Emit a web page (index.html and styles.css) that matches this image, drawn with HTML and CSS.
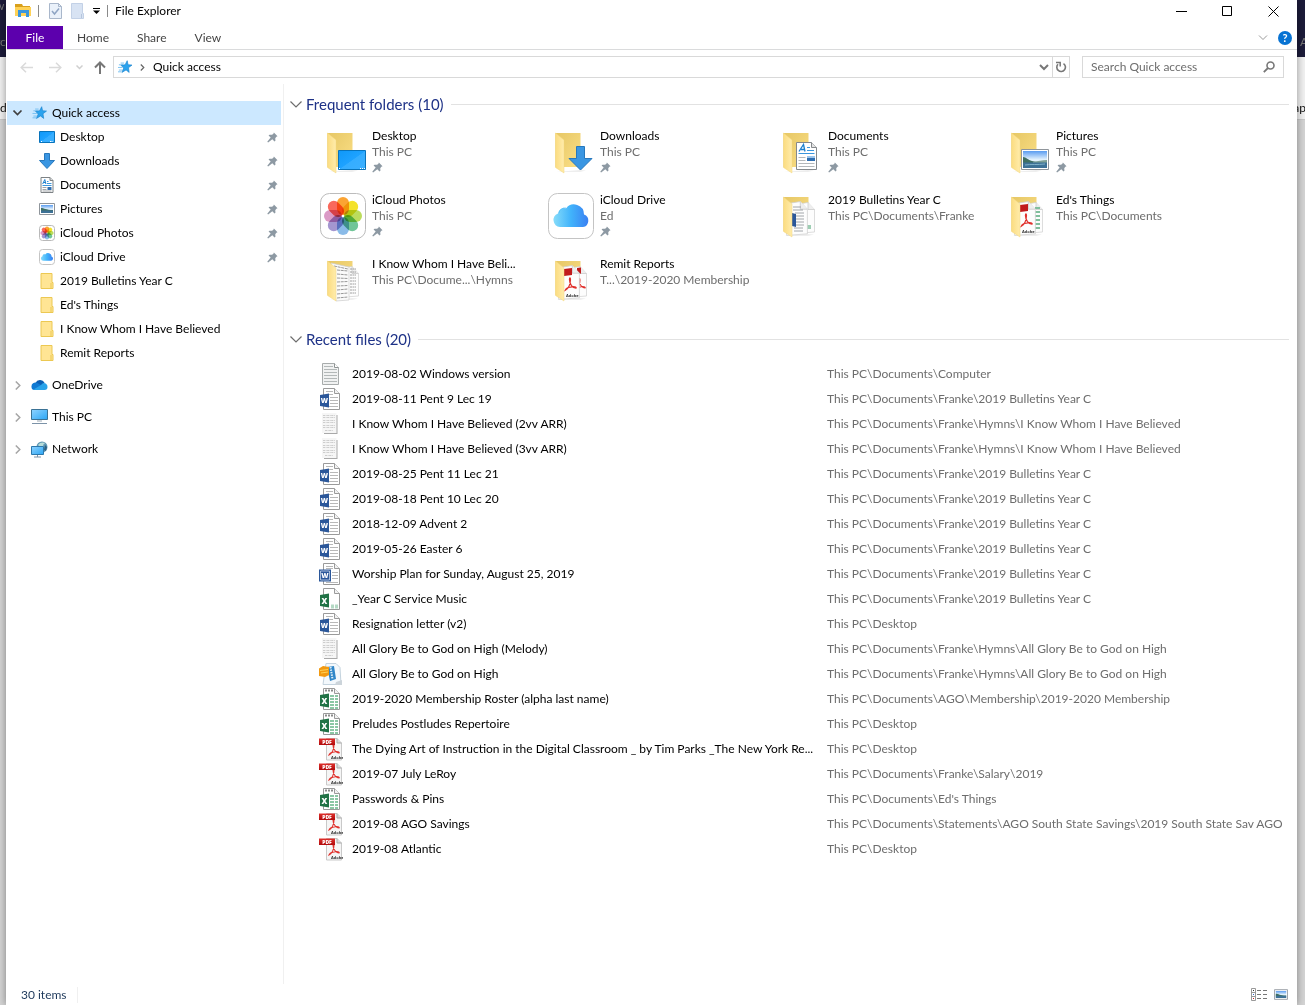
FILE: index.html
```html
<!DOCTYPE html>
<html lang="en">
<head>
    <meta charset="UTF-8">
    <meta name="viewport" content="width=device-width, initial-scale=1.0">
    <title>File Explorer</title>
    <link rel="stylesheet" href="styles.css">
</head>
<body>
    <!-- Shared gradients -->
    <svg class="gradients" aria-hidden="true">
        <defs>
            <linearGradient id="gBlue" x1="0" y1="0" x2="1" y2="1">
                <stop offset="0" stop-color="#0f98f8"/><stop offset=".5" stop-color="#1ea2ff"/><stop offset=".52" stop-color="#35adff"/><stop offset="1" stop-color="#3cb0ff"/>
            </linearGradient>
            <linearGradient id="gScreen" x1="0" y1="0" x2="1" y2="1">
                <stop offset="0" stop-color="#8fd3ff"/><stop offset="1" stop-color="#2ba6f5"/>
            </linearGradient>
            <linearGradient id="gBack" x1="0" y1="0" x2="1" y2="1">
                <stop offset="0" stop-color="#e6c765"/><stop offset="1" stop-color="#fbdf86"/>
            </linearGradient>
            <linearGradient id="gFlap" x1="0" y1="0" x2="1" y2="0">
                <stop offset="0" stop-color="#fbdc80"/><stop offset="1" stop-color="#ffecac"/>
            </linearGradient>
            <linearGradient id="gCloud" x1="0" y1="0" x2="1" y2="0">
                <stop offset="0" stop-color="#86dcfa"/><stop offset=".5" stop-color="#41b3fb"/><stop offset="1" stop-color="#3a80f2"/>
            </linearGradient>
            <linearGradient id="gSky" x1="0" y1="0" x2="0" y2="1">
                <stop offset="0" stop-color="#5a9cf0"/><stop offset=".5" stop-color="#e2f1fd"/>
            </linearGradient>
            <linearGradient id="gRed" x1="0" y1="0" x2="0" y2="1">
                <stop offset="0" stop-color="#e0302c"/><stop offset="1" stop-color="#b00a0c"/>
            </linearGradient>
        </defs>
    </svg>

    <!-- Icon sprite -->
    <svg class="sprite" aria-hidden="true">
        <symbol id="i-explorer" viewBox="0 0 16 16">
            <path d="M0 1h7l1 2h7v3H0z" fill="#d9a01c"/>
            <path d="M0 4h16v9H0z" fill="#ffd257"/>
            <path d="M3 7h11v7h-3v-4H6v4H3z" fill="#3a96dd"/>
        </symbol>
        <symbol id="i-props" viewBox="0 0 13 16">
            <path d="M.5.5h9l3 3v12H.5z" fill="#eaf1fa" stroke="#a9b7cb"/>
            <path d="M9.500.5v3h3" fill="none" stroke="#a9b7cb"/>
            <path d="M3 8l2.500 3L10 5.500" fill="none" stroke="#8fa5c4" stroke-width="1.500"/>
        </symbol>
        <symbol id="i-newfolder" viewBox="0 0 13 16">
            <path d="M.5.5h11v10h1v5H.5z" fill="#d8e3f3" stroke="#c3d1e6"/>
            <path d="M10.500 11v4" stroke="#b5c5dc"/>
        </symbol>
        <symbol id="i-star" viewBox="0 0 16 16">
            <path d="M1 5.500h5M3 3.500h4M0 8.500h5M1 11.500h4M0 13.500h4" stroke="#6bbcf0"/>
            <path d="M10.500.8l1 4.600 4.500.4-4 3 .8 5.400-3.600-2.800-4.700 2.800 2-5L3.500 6l4.600-.5z" fill="#2ba3ee" stroke="#1681cc" stroke-width=".7"/>
        </symbol>
        <symbol id="i-pin" viewBox="0 0 12 12">
            <path d="M7.500.5l4 4-1.300.8-1.200 1.600.2 2.600-1 .9-2.400-2.400L1.200 11.500l-.9-.9L4 6 1.700 3.800l1-.9 2.800.2L7 2z" fill="#8d99a3"/>
        </symbol>

        <symbol id="i-desktop" viewBox="0 0 16 12">
            <path d="M.5.5h15v11H.5z" fill="url(#gBlue)" stroke="#0873bb"/>
            <path d="M2 10.500h1M11 10.500h3" stroke="#fff" stroke-dasharray="1 .5"/>
        </symbol>
        <symbol id="i-download" viewBox="0 0 16 16">
            <path d="M5.500.5h5v7h5L8 15.500.5 7.500h5z" fill="#3a96e2" stroke="#2778bd"/>
        </symbol>
        <symbol id="i-document" viewBox="0 0 13 16">
            <path d="M.5.5h9l3 3v12H.5z" fill="#fff" stroke="#7d8285"/>
            <path d="M9.500.5v3h3" fill="#ddd" stroke="#7d8285"/>
            <path d="M2.200 7L4.300 2.500 5.400 7M3 5.500h2" fill="none" stroke="#1d80cf"/>
            <path d="M6.500 4.500H8M6.500 6.500H11M2 8.500h9" stroke="#3a96dd"/>
            <path d="M2 10.500h4M2 12.500h4M2 14h9" stroke="#8a8f94" stroke-width=".8"/>
            <path d="M7 10h4v3H7z" fill="#2f6eb0"/>
        </symbol>
        <symbol id="i-picture" viewBox="0 0 28 21">
            <path d="M2 2h24v17H2z" fill="url(#gSky)"/>
            <path d="M2 8c3 0 5 3 9 4l9 2H2z" fill="#3f6f62"/>
            <path d="M12 13c5-1 9-2 14-2v3H12z" fill="#7d9f95"/>
            <path d="M2 13.500h24V19H2z" fill="#3d7196"/>
            <path d="M4 16c6-1 12 0 20-1" fill="none" stroke="#7eb0c9"/>
            <path d="M.5.5h27v20H.5zM2 2v17h24V2z" fill="#fff" fill-rule="evenodd"/>
            <path d="M.5.5h27v20H.5z" fill="none" stroke="#8f959b"/>
        </symbol>
        <symbol id="i-picture-sm" viewBox="0 0 16 12">
            <path d="M.5.5h15v11H.5z" fill="#fff" stroke="#8f959b"/>
            <path d="M2 2h12v8H2z" fill="url(#gSky)"/>
            <path d="M2 5c3 0 5 2 12 2v1H2z" fill="#3f6f62"/>
            <path d="M2 7.500h12V10H2z" fill="#3d7196"/>
        </symbol>
        <symbol id="p-petals" viewBox="0 0 46 46">
            <g class="petals">
                <rect x="17" y="4" width="12" height="18" rx="6" fill="#fb9a1c"/>
                <rect x="17" y="4" width="12" height="18" rx="6" fill="#f3df14" transform="rotate(45 23 23)"/>
                <rect x="17" y="4" width="12" height="18" rx="6" fill="#b4d84a" transform="rotate(90 23 23)"/>
                <rect x="17" y="4" width="12" height="18" rx="6" fill="#61bf8d" transform="rotate(135 23 23)"/>
                <rect x="17" y="4" width="12" height="18" rx="6" fill="#7db4e6" transform="rotate(180 23 23)"/>
                <rect x="17" y="4" width="12" height="18" rx="6" fill="#9a8bcb" transform="rotate(225 23 23)"/>
                <rect x="17" y="4" width="12" height="18" rx="6" fill="#d78fc0" transform="rotate(270 23 23)"/>
                <rect x="17" y="4" width="12" height="18" rx="6" fill="#f9594a" transform="rotate(315 23 23)"/>
            </g>
            <circle cx="23" cy="23" r="1.200" fill="#fff"/>
        </symbol>
        <symbol id="p-cloud" viewBox="0 0 46 46">
            <path d="M12 34a7 7 0 0 1-2-13.500 6 6 0 0 1 8-5 10 10 0 0 1 18 6 6.500 6.500 0 0 1-1 12.500z" fill="url(#gCloud)"/>
            <path d="M11 20a6 6 0 0 1 7-5l1 3" fill="none" stroke="#55bdf5" stroke-width=".7"/>
        </symbol>
        <symbol id="i-photos" viewBox="0 0 46 46">
            <rect x=".5" y=".5" width="45" height="45" rx="9" fill="#fff" stroke="#bcbcbc"/>
            <use href="#p-petals"/>
        </symbol>
        <symbol id="i-photos-sm" viewBox="0 0 16 16">
            <rect x=".5" y=".5" width="15" height="15" rx="3" fill="#fff" stroke="#b9b9b9"/>
            <use href="#p-petals" x="0" y="0" width="16" height="16"/>
        </symbol>
        <symbol id="i-icloud" viewBox="0 0 46 46">
            <rect x=".5" y=".5" width="45" height="45" rx="9" fill="#fff" stroke="#c4c4c4"/>
            <use href="#p-cloud"/>
        </symbol>
        <symbol id="i-icloud-sm" viewBox="0 0 16 16">
            <rect x=".5" y=".5" width="15" height="15" rx="3" fill="#fff" stroke="#c4c4c4"/>
            <use href="#p-cloud" x="0" y="0" width="16" height="16"/>
        </symbol>
        <symbol id="i-folder-sm" viewBox="0 0 13 16">
            <path d="M.5.500h11v9h1v6H.5z" fill="#ffe594" stroke="#ecc852"/>
            <path d="M10.500 10v5" stroke="#ecc852"/>
        </symbol>
        <symbol id="i-onedrive" viewBox="0 0 16 12">
            <path d="M4 4a5 5 0 0 1 9-.5L10 8 2 6z" fill="#0b5fb4"/>
            <path d="M0 8a4 4 0 0 1 5.500-4.200L11 7l-7 4H3a3 3 0 0 1-3-3z" fill="#0f7ad3"/>
            <path d="M2 10.500L9.500 6l1.500-1.500A3.500 3.500 0 0 1 16 8a3 3 0 0 1-3 3H3.500z" fill="#28a3ea"/>
        </symbol>
        <symbol id="i-pc" viewBox="0 0 17 16">
            <path d="M.5.5h16v10H.5z" fill="url(#gScreen)" stroke="#3b7295"/>
            <path d="M6 12h5" stroke="#99a7b3"/>
            <path d="M1 14.500h15" stroke="#7c93a8"/>
        </symbol>
        <symbol id="i-network" viewBox="0 0 17 17">
            <circle cx="11" cy="6" r="5.500" fill="#5e97b3"/>
            <path d="M7 4c2-3 5-3 7-2l-2 2 1 2-3 1z" fill="#b7dcd9"/>
            <path d="M14 4l2 2-1 4-2-1z" fill="#2c6184"/>
            <path d="M.5 5.500h12v8H.5z" fill="url(#gScreen)" stroke="#2c78ac"/>
            <path d="M6.500 14v2M3 16h7" stroke="#7c93a8"/>
        </symbol>

        <!-- open folder, drawn as two parts so papers can sit between them -->
        <symbol id="p-back" viewBox="0 0 46 46">
            <path d="M8 43l24-2 6 .5-6 1.500H15z" fill="#eee"/>
            <path d="M7.500 4h25v34h-25z" fill="url(#gBack)"/>
        </symbol>
        <symbol id="p-flap" viewBox="0 0 46 46">
            <path d="M7.500 4l8.500 7v33l-8.500-5.500z" fill="url(#gFlap)" stroke="#f3d67e" stroke-width=".5"/>
        </symbol>
        <symbol id="p-page" viewBox="0 0 20 32">
            <path d="M.5 2.500L13 .5l6.500 7V30L.5 31.500z" fill="#fdfdfd" stroke="#cfcfcf" stroke-width=".7"/>
            <path d="M13 .5v7h6.500" fill="#eee" stroke="#c5c5c5" stroke-width=".7"/>
        </symbol>
        <symbol id="p-swirl" viewBox="0 0 12 14">
            <path d="M1 12c3-1 5-6 5-10 0-2-1-2-1 0 0 4 3 8 6 8 1-1-2-2-5-1-2 0-4 1-5 3z" fill="none" stroke="#e0312c" stroke-width="1.100"/>
        </symbol>

        <symbol id="t-desktop" viewBox="0 0 46 46">
            <use href="#p-back"/><use href="#p-flap"/>
            <path d="M18.500 21.500h27v19h-27z" fill="url(#gBlue)" stroke="#0873bb"/>
            <path d="M19 39.500h1M40 39.500h5" stroke="#fff" stroke-dasharray="1 1"/>
        </symbol>
        <symbol id="t-downloads" viewBox="0 0 46 46">
            <use href="#p-back"/><use href="#p-flap"/>
            <path d="M28.500 17.500h8v12h7.500L32.500 41 21 29.500h7.500z" fill="#3a96e2" stroke="#2778bd"/>
        </symbol>
        <symbol id="t-documents" viewBox="0 0 46 46">
            <use href="#p-back"/><use href="#p-flap"/>
            <path d="M20.500 13.500h15l5 5v22h-20z" fill="#fff" stroke="#85898c"/>
            <path d="M35.500 13.500v5h5" fill="#e4e4e4" stroke="#85898c"/>
            <path d="M23 22.500l4.500-7 1.500 7M25 20.500h4" fill="none" stroke="#1d80cf" stroke-width="1.300"/>
            <path d="M31 18.500h3M31 21.500h7M22.500 24.500h16" stroke="#3a96dd"/>
            <path d="M22.500 28.500h7M22.500 31.500h7M22.500 34.500h16M22.500 37.500h16" stroke="#b4b8bb"/>
            <path d="M31 27h8v5h-8z" fill="#2f6eb0"/><path d="M31 27h8v2h-8z" fill="#9cc5ec"/>
        </symbol>
        <symbol id="t-pictures" viewBox="0 0 46 46">
            <use href="#p-back"/><use href="#p-flap"/>
            <use href="#i-picture" x="17" y="20" width="28" height="21"/>
        </symbol>
        <symbol id="t-bulletins" viewBox="0 0 46 46">
            <use href="#p-back"/>
            <use href="#p-page" x="19" y="8" width="20" height="34"/>
            <path d="M31 33h4M31 35h4" stroke="#7fbf9b" stroke-width="1.500"/>
            <use href="#p-page" x="10" y="8" width="22" height="35"/>
            <path d="M17 14h8M17 17h10M19 20h9M20 23h8M20 26h8M20 29h8M20 32h8M18 35h9M18 38h9" stroke="#8a8f94" stroke-width=".8"/>
            <path d="M16 20l4 1v13l-4-1z" fill="#2b579a"/>
            <use href="#p-flap"/>
        </symbol>
        <symbol id="t-things" viewBox="0 0 46 46">
            <use href="#p-back"/>
            <use href="#p-page" x="19" y="8" width="20" height="34"/>
            <path d="M31 15h5M31 19h5M31 23h5M31 27h5M31 31h5M31 35h5" stroke="#80bf9c" stroke-width="2"/>
            <use href="#p-page" x="10" y="8" width="22" height="35"/>
            <path d="M16 12l8-1v7l-8 1z" fill="#c11a1c"/>
            <use href="#p-swirl" x="16" y="20" width="13" height="16"/>
            <text x="18" y="40" class="adobe" font-size="4">Adobe</text>
            <use href="#p-flap"/>
        </symbol>
        <symbol id="t-hymns" viewBox="0 0 46 46">
            <use href="#p-back"/>
            <use href="#p-page" x="19" y="8" width="20" height="34"/>
            <path d="M30 12h6M30 15h6M30 18h6M30 21h6M30 24h6M30 27h6M30 30h6M30 33h6M30 36h6" stroke="#888" stroke-width=".8" stroke-dasharray="2 .5"/>
            <path d="M11 6l18 4v33l-13 1z" fill="#fafafa" stroke="#ccc" stroke-width=".7"/>
            <path d="M14 9l14 3M17 13l11 1M17 17l11 1M17 21l11 .5M17 25l11-.5M17 29l11-.5M17 33l11-1M17 37l11-1M17 41l11-1" stroke="#808080" stroke-width=".8" stroke-dasharray="3 .7"/>
            <use href="#p-flap"/>
        </symbol>
        <symbol id="t-remit" viewBox="0 0 46 46">
            <use href="#p-back"/>
            <use href="#p-page" x="19" y="8" width="20" height="34"/>
            <path d="M29 11l4-.5v6l-4 .5z" fill="#c11a1c"/>
            <use href="#p-swirl" x="26" y="20" width="12" height="16"/>
            <use href="#p-page" x="10" y="8" width="22" height="35"/>
            <path d="M16 12l8-1v7l-8 1z" fill="#c11a1c"/>
            <use href="#p-swirl" x="16" y="20" width="13" height="16"/>
            <text x="18" y="40" class="adobe" font-size="4">Adobe</text>
            <use href="#p-flap"/>
        </symbol>

        <symbol id="f-page" viewBox="0 0 24 24">
            <path d="M4.500 1.500h11l5 5v16h-16z" fill="#fff" stroke="#9a9a9a"/>
            <path d="M15.500 1.500v5h5" fill="#f2f2f2" stroke="#9a9a9a"/>
        </symbol>
        <symbol id="f-text" viewBox="0 0 24 24">
            <path d="M3.500 1.500h12l4 4v17h-16z" fill="#f1f2f2" stroke="#a8acac"/>
            <path d="M15.500 1.500v4h4" fill="#fff" stroke="#8f9494"/>
            <path d="M5 4.500h9M5 7.500h13M5 10.500h13M5 13.500h13M5 16.500h13M5 19.500h13" stroke="#b3b8b8"/>
        </symbol>
        <symbol id="f-scan" viewBox="0 0 24 24">
            <path d="M5 3h13.500v19H5z" fill="#a9a9a9"/>
            <path d="M3 1h14.500v20H3z" fill="#f6f6f6"/>
            <path d="M4 3.500h12M4 5.500h12M4 8.500h12M4 10.500h12M4 13.500h12M4 15.500h12M6 18.500h8" stroke="#cdcdcd" stroke-dasharray="2 .6 1 .5"/>
        </symbol>
        <symbol id="f-word" viewBox="0 0 24 24">
            <use href="#f-page"/>
            <path d="M7 4.500h7M7 7.500h7M11 10.500h8M11 13.500h8M11 16.500h8M7 19.500h12" stroke="#b8b8b8"/>
            <path d="M1 8l9-1.500v14L1 19z" fill="#2b579a"/>
            <text x="5.500" y="16" class="badge" font-size="7">W</text>
        </symbol>
        <symbol id="f-worddoc" viewBox="0 0 24 24">
            <use href="#f-page"/>
            <path d="M7 4.500h7M7 6.500h7M13 10.500h6M13 13.500h6M13 16.500h6M7 20.500h12" stroke="#b8b8b8"/>
            <path d="M0 7.500h12v12H0z" fill="#2b579a"/>
            <path d="M1.500 9h9v9h-9z" fill="none" stroke="#dbe6f5" stroke-width=".7"/>
            <text x="6" y="16" class="badge" font-size="7">W</text>
        </symbol>
        <symbol id="f-csv" viewBox="0 0 24 24">
            <use href="#f-page"/>
            <path d="M12 17.500h3v4h-3zM16 17.500h3v4h-3z" fill="#b5dac5"/>
            <path d="M1 8l9-1.500v14L1 19z" fill="#217346"/>
            <text x="5.500" y="16.500" class="badge" font-size="8">X</text>
        </symbol>
        <symbol id="f-excel" viewBox="0 0 24 24">
            <use href="#f-page"/>
            <path d="M6 3.500h8" stroke="#8a8a8a" stroke-width="2" stroke-dasharray="2 1"/>
            <path d="M11 9h8M11 12h8M11 15h8M11 18h8M11 21h8" stroke="#8cc7a5" stroke-width="2" stroke-dasharray="4 1"/>
            <path d="M1 8l9-1.500v14L1 19z" fill="#217346"/>
            <text x="5.500" y="16.500" class="badge" font-size="8">X</text>
        </symbol>
        <symbol id="f-zip" viewBox="0 0 24 24">
            <path d="M7 1.500h10l4 4 1 17H4z" fill="#f3f8fc" stroke="#c4d3de"/>
            <path d="M17 20l6-2v5h-7z" fill="#ccd4da"/>
            <path d="M8 5l7-1 2 13-6 2z" fill="#2f86c8"/>
            <path d="M11.500 5l2 12" stroke="#dcecf6" stroke-width="2" stroke-dasharray="1.500 1"/>
            <path d="M0 6.500L4 4l6 1v8l-4 2-6-1z" fill="#f29a12"/>
            <path d="M1 8.500l8-1M2 11l7-1" stroke="#ffd257"/>
        </symbol>
        <symbol id="f-pdf" viewBox="0 0 24 24">
            <path d="M7.500 1.500H18l4.500 4.500v17h-15z" fill="#f5f5f5" stroke="#c9c9c9"/>
            <path d="M18 1.500V6h4.500" fill="#dcdcdc" stroke="#a9a9a9"/>
            <use href="#p-swirl" x="8" y="6" width="14" height="14"/>
            <text x="12" y="22" class="adobe" font-size="4">Adobe</text>
            <path d="M0 1.500h16V8H0z" fill="url(#gRed)"/>
            <text x="8" y="6.500" class="badge" font-size="5">PDF</text>
        </symbol>
    </svg>

    <!-- Page showing behind the window -->
    <div class="backdrop" aria-hidden="true">
        <div class="backdrop-bar"></div>
        <div class="backdrop-page"></div>
        <span class="peek peek-w">w</span>
        <span class="peek peek-rc">rc</span>
        <span class="peek peek-d">d</span>
        <span class="peek peek-a">A</span>
        <span class="peek peek-ap">ap</span>
    </div>

    <div class="window">
        <header class="title-bar">
            <svg class="app-icon" width="16" height="16"><use href="#i-explorer"/></svg>
            <span class="separator"></span>
            <button class="quick-button" aria-label="Properties"><svg width="13" height="16"><use href="#i-props"/></svg></button>
            <button class="quick-button" aria-label="New folder"><svg width="13" height="16"><use href="#i-newfolder"/></svg></button>
            <button class="quick-button" aria-label="Customize toolbar"><svg width="7" height="6" viewBox="0 0 7 6"><path d="M0 .5h7" stroke="#000"/><path d="M0 2.500h7L3.500 6z"/></svg></button>
            <span class="separator"></span>
            <h1 class="title">File Explorer</h1>
            <div class="window-buttons">
                <button aria-label="Minimize"><svg width="11" height="11"><path d="M0 5.500h11" stroke="#000"/></svg></button>
                <button aria-label="Maximize"><svg width="11" height="11"><path d="M.5.5h9v9h-9z" fill="none" stroke="#000"/></svg></button>
                <button aria-label="Close"><svg width="11" height="11"><path d="M.5.5l10 10M10.500.5l-10 10" stroke="#000"/></svg></button>
            </div>
        </header>

        <nav class="ribbon">
            <button class="tab tab-file">File</button>
            <button class="tab">Home</button>
            <button class="tab">Share</button>
            <button class="tab">View</button>
            <div class="ribbon-tools">
                <button aria-label="Expand the Ribbon"><svg width="10" height="6"><path d="M1 .5l4 4 4-4" fill="none" stroke="#999"/></svg></button>
                <button class="help" aria-label="Help">?</button>
            </div>
        </nav>

        <div class="nav-bar">
            <button class="nav-button" aria-label="Back"><svg width="13" height="11"><path d="M13 5.500H1M6 .8L1.200 5.500 6 10.200" fill="none" stroke="#dadada" stroke-width="1.500"/></svg></button>
            <button class="nav-button" aria-label="Forward"><svg width="13" height="11"><path d="M0 5.500h12M7 .8l4.800 4.700L7 10.200" fill="none" stroke="#dadada" stroke-width="1.500"/></svg></button>
            <button class="nav-button nav-recent" aria-label="Recent locations"><svg width="7" height="5"><path d="M.5.500l3 3 3-3" fill="none" stroke="#cfcfcf" stroke-width="1.500"/></svg></button>
            <button class="nav-button nav-up" aria-label="Up"><svg width="12" height="13"><path d="M6 13V1.500M1 6.500l5-5 5 5" fill="none" stroke="#777" stroke-width="2"/></svg></button>
            <div class="address">
                <svg width="14" height="14"><use href="#i-star"/></svg>
                <svg width="5" height="7"><path d="M.8.500l3 3-3 3" fill="none" stroke="#666" stroke-width="1.200"/></svg>
                <a class="crumb" href="#quick">Quick access</a>
                <button class="address-drop" aria-label="Previous locations"><svg width="10" height="7"><path d="M1 1l4 4 4-4" fill="none" stroke="#777" stroke-width="2"/></svg></button>
                <button class="address-refresh" aria-label="Refresh"><svg width="12" height="12"><path d="M8.500 2.600A4.300 4.300 0 1 1 3 3.200" fill="none" stroke="#777" stroke-width="1.600"/><path d="M1 1.500h4.200v4" fill="none" stroke="#777" stroke-width="1.500"/></svg></button>
            </div>
            <div class="search">
                <input type="search" placeholder="Search Quick access" aria-label="Search Quick access">
                <svg width="12" height="12"><circle cx="7.500" cy="4.500" r="3.500" fill="none" stroke="#777" stroke-width="1.600"/><path d="M5 7L.8 11.200" stroke="#777" stroke-width="1.800"/></svg>
            </div>
        </div>

        <div class="content">
            <aside class="sidebar">
                <a class="tree-item selected" href="#quick">
                    <svg class="arrow" width="9" height="6"><path d="M.5.500l4 4 4-4" fill="none" stroke="#404040" stroke-width="1.600"/></svg>
                    <svg class="tree-icon" width="14" height="14"><use href="#i-star"/></svg>Quick access
                </a>
                <a class="tree-item child" href="#desktop"><svg class="tree-icon" width="16" height="12"><use href="#i-desktop"/></svg>Desktop<svg class="pin" width="11" height="11"><use href="#i-pin"/></svg></a>
                <a class="tree-item child" href="#downloads"><svg class="tree-icon" width="16" height="16"><use href="#i-download"/></svg>Downloads<svg class="pin" width="11" height="11"><use href="#i-pin"/></svg></a>
                <a class="tree-item child" href="#documents"><svg class="tree-icon" width="16" height="16"><use href="#i-document"/></svg>Documents<svg class="pin" width="11" height="11"><use href="#i-pin"/></svg></a>
                <a class="tree-item child" href="#pictures"><svg class="tree-icon" width="16" height="12"><use href="#i-picture-sm"/></svg>Pictures<svg class="pin" width="11" height="11"><use href="#i-pin"/></svg></a>
                <a class="tree-item child" href="#photos"><svg class="tree-icon" width="16" height="16"><use href="#i-photos-sm"/></svg>iCloud Photos<svg class="pin" width="11" height="11"><use href="#i-pin"/></svg></a>
                <a class="tree-item child" href="#icloud"><svg class="tree-icon" width="16" height="16"><use href="#i-icloud-sm"/></svg>iCloud Drive<svg class="pin" width="11" height="11"><use href="#i-pin"/></svg></a>
                <a class="tree-item child" href="#bulletins"><svg class="tree-icon" width="16" height="16"><use href="#i-folder-sm"/></svg>2019 Bulletins Year C</a>
                <a class="tree-item child" href="#things"><svg class="tree-icon" width="16" height="16"><use href="#i-folder-sm"/></svg>Ed's Things</a>
                <a class="tree-item child" href="#hymn"><svg class="tree-icon" width="16" height="16"><use href="#i-folder-sm"/></svg>I Know Whom I Have Believed</a>
                <a class="tree-item child" href="#remit"><svg class="tree-icon" width="16" height="16"><use href="#i-folder-sm"/></svg>Remit Reports</a>
                <a class="tree-item root" href="#onedrive">
                    <svg class="arrow" width="10" height="9"><path d="M2.800.500l4 4-4 4" fill="none" stroke="#a6a6a6" stroke-width="1.500"/></svg>
                    <svg class="tree-icon" width="16" height="12"><use href="#i-onedrive"/></svg>OneDrive
                </a>
                <a class="tree-item root" href="#pc">
                    <svg class="arrow" width="10" height="9"><path d="M2.800.500l4 4-4 4" fill="none" stroke="#a6a6a6" stroke-width="1.500"/></svg>
                    <svg class="tree-icon" width="17" height="16"><use href="#i-pc"/></svg>This PC
                </a>
                <a class="tree-item root" href="#network">
                    <svg class="arrow" width="10" height="9"><path d="M2.800.500l4 4-4 4" fill="none" stroke="#a6a6a6" stroke-width="1.500"/></svg>
                    <svg class="tree-icon" width="17" height="17"><use href="#i-network"/></svg>Network
                </a>
            </aside>

            <main class="files">
                <h2 class="group-title"><svg width="12" height="7"><path d="M.5.500l5.500 5.500L11.500.5" fill="none" stroke="#6d6d6d" stroke-width="1.200"/></svg>Frequent folders (10)</h2>
                <div class="tiles">
                    <a class="tile" href="#desktop">
                        <svg width="46" height="46"><use href="#t-desktop"/></svg>
                        <div class="tile-text"><div>Desktop</div><div class="muted">This PC</div><svg width="11" height="11"><use href="#i-pin"/></svg></div>
                    </a>
                    <a class="tile" href="#downloads">
                        <svg width="46" height="46"><use href="#t-downloads"/></svg>
                        <div class="tile-text"><div>Downloads</div><div class="muted">This PC</div><svg width="11" height="11"><use href="#i-pin"/></svg></div>
                    </a>
                    <a class="tile" href="#documents">
                        <svg width="46" height="46"><use href="#t-documents"/></svg>
                        <div class="tile-text"><div>Documents</div><div class="muted">This PC</div><svg width="11" height="11"><use href="#i-pin"/></svg></div>
                    </a>
                    <a class="tile" href="#pictures">
                        <svg width="46" height="46"><use href="#t-pictures"/></svg>
                        <div class="tile-text"><div>Pictures</div><div class="muted">This PC</div><svg width="11" height="11"><use href="#i-pin"/></svg></div>
                    </a>
                    <a class="tile" href="#photos">
                        <svg width="46" height="46"><use href="#i-photos"/></svg>
                        <div class="tile-text"><div>iCloud Photos</div><div class="muted">This PC</div><svg width="11" height="11"><use href="#i-pin"/></svg></div>
                    </a>
                    <a class="tile" href="#icloud">
                        <svg width="46" height="46"><use href="#i-icloud"/></svg>
                        <div class="tile-text"><div>iCloud Drive</div><div class="muted">Ed</div><svg width="11" height="11"><use href="#i-pin"/></svg></div>
                    </a>
                    <a class="tile" href="#bulletins">
                        <svg width="46" height="46"><use href="#t-bulletins"/></svg>
                        <div class="tile-text"><div>2019 Bulletins Year C</div><div class="muted">This PC\Documents\Franke</div></div>
                    </a>
                    <a class="tile" href="#things">
                        <svg width="46" height="46"><use href="#t-things"/></svg>
                        <div class="tile-text"><div>Ed's Things</div><div class="muted">This PC\Documents</div></div>
                    </a>
                    <a class="tile" href="#hymn">
                        <svg width="46" height="46"><use href="#t-hymns"/></svg>
                        <div class="tile-text"><div>I Know Whom I Have Beli...</div><div class="muted">This PC\Docume...\Hymns</div></div>
                    </a>
                    <a class="tile" href="#remit">
                        <svg width="46" height="46"><use href="#t-remit"/></svg>
                        <div class="tile-text"><div>Remit Reports</div><div class="muted">T...\2019-2020 Membership</div></div>
                    </a>
                </div>

                <h2 class="group-title"><svg width="12" height="7"><path d="M.5.500l5.500 5.500L11.500.5" fill="none" stroke="#6d6d6d" stroke-width="1.200"/></svg>Recent files (20)</h2>
                <table class="recent">
                    <tbody>
                        <tr><td class="name"><svg width="24" height="24"><use href="#f-text"/></svg>2019-08-02 Windows version</td><td>This PC\Documents\Computer</td></tr>
                        <tr><td class="name"><svg width="24" height="24"><use href="#f-word"/></svg>2019-08-11 Pent 9 Lec 19</td><td>This PC\Documents\Franke\2019 Bulletins Year C</td></tr>
                        <tr><td class="name"><svg width="24" height="24"><use href="#f-scan"/></svg>I Know Whom I Have Believed (2vv ARR)</td><td>This PC\Documents\Franke\Hymns\I Know Whom I Have Believed</td></tr>
                        <tr><td class="name"><svg width="24" height="24"><use href="#f-scan"/></svg>I Know Whom I Have Believed (3vv ARR)</td><td>This PC\Documents\Franke\Hymns\I Know Whom I Have Believed</td></tr>
                        <tr><td class="name"><svg width="24" height="24"><use href="#f-word"/></svg>2019-08-25 Pent 11 Lec 21</td><td>This PC\Documents\Franke\2019 Bulletins Year C</td></tr>
                        <tr><td class="name"><svg width="24" height="24"><use href="#f-word"/></svg>2019-08-18 Pent 10 Lec 20</td><td>This PC\Documents\Franke\2019 Bulletins Year C</td></tr>
                        <tr><td class="name"><svg width="24" height="24"><use href="#f-word"/></svg>2018-12-09 Advent 2</td><td>This PC\Documents\Franke\2019 Bulletins Year C</td></tr>
                        <tr><td class="name"><svg width="24" height="24"><use href="#f-word"/></svg>2019-05-26 Easter 6</td><td>This PC\Documents\Franke\2019 Bulletins Year C</td></tr>
                        <tr><td class="name"><svg width="24" height="24"><use href="#f-worddoc"/></svg>Worship Plan for Sunday, August 25, 2019</td><td>This PC\Documents\Franke\2019 Bulletins Year C</td></tr>
                        <tr><td class="name"><svg width="24" height="24"><use href="#f-csv"/></svg>_Year C Service Music</td><td>This PC\Documents\Franke\2019 Bulletins Year C</td></tr>
                        <tr><td class="name"><svg width="24" height="24"><use href="#f-word"/></svg>Resignation letter (v2)</td><td>This PC\Desktop</td></tr>
                        <tr><td class="name"><svg width="24" height="24"><use href="#f-scan"/></svg>All Glory Be to God on High (Melody)</td><td>This PC\Documents\Franke\Hymns\All Glory Be to God on High</td></tr>
                        <tr><td class="name"><svg width="24" height="24"><use href="#f-zip"/></svg>All Glory Be to God on High</td><td>This PC\Documents\Franke\Hymns\All Glory Be to God on High</td></tr>
                        <tr><td class="name"><svg width="24" height="24"><use href="#f-excel"/></svg>2019-2020 Membership Roster (alpha last name)</td><td>This PC\Documents\AGO\Membership\2019-2020 Membership</td></tr>
                        <tr><td class="name"><svg width="24" height="24"><use href="#f-excel"/></svg>Preludes Postludes Repertoire</td><td>This PC\Desktop</td></tr>
                        <tr><td class="name"><svg width="24" height="24"><use href="#f-pdf"/></svg>The Dying Art of Instruction in the Digital Classroom _ by Tim Parks _The New York Re...</td><td>This PC\Desktop</td></tr>
                        <tr><td class="name"><svg width="24" height="24"><use href="#f-pdf"/></svg>2019-07 July LeRoy</td><td>This PC\Documents\Franke\Salary\2019</td></tr>
                        <tr><td class="name"><svg width="24" height="24"><use href="#f-excel"/></svg>Passwords &amp; Pins</td><td>This PC\Documents\Ed's Things</td></tr>
                        <tr><td class="name"><svg width="24" height="24"><use href="#f-pdf"/></svg>2019-08 AGO Savings</td><td>This PC\Documents\Statements\AGO South State Savings\2019 South State Sav AGO</td></tr>
                        <tr><td class="name"><svg width="24" height="24"><use href="#f-pdf"/></svg>2019-08 Atlantic</td><td>This PC\Desktop</td></tr>
                    </tbody>
                </table>
            </main>
        </div>

        <footer class="status-bar">
            <span class="item-count">30 items</span>
            <div class="view-buttons">
                <button aria-label="Details view"><svg width="17" height="13"><path d="M.5.500h4v12h-4zM.5 4.500h4M.5 8.500h4" fill="none" stroke="#999"/><path d="M2 2.500h1" stroke="#333"/><path d="M2 6.500h1" stroke="#36c"/><path d="M2 10.500h1" stroke="#c22"/><path d="M6 2.500h4M12 2.500h4M6 6.500h4M12 6.500h4M6 10.500h4M12 10.500h4" stroke="#777"/></svg></button>
                <button aria-label="Large icons view"><svg width="14" height="11"><use href="#i-picture-sm"/></svg></button>
            </div>
        </footer>
    </div>
</body>
</html>
```
FILE: styles.css
```css
* {
    margin: 0;
    padding: 0;
    box-sizing: border-box;
}

body {
    font-family: Lato, 'Open Sans', sans-serif;
    font-size: 12px;
    line-height: 16px;
    color: #000;
    background: #d4d4d4;
}

a {
    color: inherit;
    text-decoration: none;
}

button {
    border: none;
    background: none;
    font: inherit;
    color: inherit;
    display: flex;
    align-items: center;
    justify-content: center;
}

svg {
    display: block;
    flex: none;
}

.gradients {
    position: absolute;
    width: 0;
    height: 0;
}

.sprite {
    display: none;
}

.petals rect {
    mix-blend-mode: multiply;
    opacity: 0.9;
}

.badge {
    fill: #fff;
    font-family: 'Open Sans', sans-serif;
    font-weight: 800;
    text-anchor: middle;
}

.adobe {
    fill: #333;
    font-family: 'Open Sans', sans-serif;
    font-weight: 700;
}

/* Page behind the window */
.backdrop {
    position: absolute;
    inset: 0;
    overflow: hidden;
}

.backdrop-bar {
    height: 57px;
    background: #1c1b3a;
}

.backdrop-page {
    height: 63px;
    background: #f1f1f1;
    border-bottom: 1px solid #c8c8c8;
}

.peek {
    position: absolute;
    color: #111;
}

.peek-w {
    left: -5px;
    top: -2px;
    color: #777;
}

.peek-rc {
    left: -4px;
    top: 34px;
    color: #777;
}

.peek-d {
    left: 0;
    top: 100px;
}

.peek-a {
    right: -3px;
    top: 34px;
    color: #777;
}

.peek-ap {
    right: -1px;
    top: 100px;
}

.window {
    position: relative;
    display: flex;
    flex-direction: column;
    min-height: 100vh;
    margin: 0 8px 0 6px;
    padding-left: 1px;
    background: #fff;
    box-shadow: 0 0 8px rgba(0, 0, 0, 0.4);
}

/* Title bar */
.title-bar {
    display: flex;
    align-items: center;
    height: 26px;
    padding: 0 1px 4px 8px;
}

.separator {
    width: 1px;
    height: 12px;
    margin: 0 7px;
    background: #8a8a8a;
}

.app-icon + .separator {
    margin-right: 10px;
}

.quick-button {
    margin-right: 9px;
}

.quick-button + .separator {
    margin-left: -2px;
}

.title {
    font-size: 12px;
    font-weight: 400;
}

.window-buttons {
    display: flex;
    margin-left: auto;
}

.window-buttons button {
    width: 46px;
    height: 22px;
}

/* Ribbon */
.ribbon {
    display: flex;
    height: 24px;
    border-bottom: 1px solid #dadbdc;
}

.tab {
    padding: 0 14px;
    color: #444;
}

.tab-file {
    width: 56px;
    background: #5c00ad;
    color: #fff;
}

.ribbon-tools {
    display: flex;
    align-items: center;
    gap: 10px;
    margin-left: auto;
    padding-right: 5px;
}

.help {
    width: 14px;
    height: 14px;
    border-radius: 50%;
    background: #0873d3;
    color: #fff;
    font-size: 11px;
    font-weight: 700;
}

/* Navigation and address */
.nav-bar {
    display: flex;
    align-items: center;
    height: 34px;
    padding: 0 13px;
}

.nav-button {
    width: 13px;
    height: 22px;
    margin-right: 16px;
}

.nav-button.nav-recent {
    width: 7px;
    margin-left: -2px;
    margin-right: 10px;
}

.nav-button.nav-up {
    margin-right: 7px;
}

.address {
    display: flex;
    flex: 1;
    align-items: center;
    height: 22px;
    padding-left: 4px;
    border: 1px solid #d9d9d9;
    gap: 8px;
}

.crumb {
    flex: 1;
}

.address-drop {
    height: 20px;
}

.address-refresh {
    width: 17px;
    height: 20px;
    margin-left: -5px;
    border-left: 1px solid #d9d9d9;
}

.search {
    display: flex;
    align-items: center;
    width: 202px;
    height: 22px;
    margin-left: 12px;
    padding: 0 8px;
    border: 1px solid #d9d9d9;
}

.search input {
    flex: 1;
    min-width: 0;
    border: none;
    outline: none;
    font: inherit;
    background: none;
}

.search input::placeholder {
    color: #6d6d6d;
    opacity: 1;
}

/* Main area */
.content {
    display: flex;
    flex: 1;
}

.sidebar {
    width: 277px;
    flex: none;
    padding: 17px 2px 0 0;
    border-right: 1px solid #f0f0f0;
}

.tree-item {
    display: flex;
    align-items: center;
    height: 24px;
    padding-right: 3px;
}

.tree-item.selected {
    background: #cce8ff;
}

.tree-item.child {
    padding-left: 32px;
}

.tree-item.root {
    margin-top: 8px;
}

.arrow {
    width: 10px;
    margin-left: 6px;
}

.tree-icon {
    width: 17px;
    margin: 0 4px 0 8px;
}

.child .tree-icon {
    width: 16px;
    margin: 0 5px 0 0;
}

.pin {
    margin-left: auto;
}

.files {
    flex: 1;
    min-width: 0;
    padding: 9px 8px 0 6px;
}

.group-title {
    display: flex;
    align-items: center;
    gap: 4px;
    height: 22px;
    color: #1e3287;
    font-size: 15px;
    font-weight: 400;
}

.group-title::after {
    content: '';
    flex: 1;
    height: 1px;
    margin-left: 3px;
    background: #e2e2e2;
}

.tiles {
    display: grid;
    grid-template-columns: repeat(auto-fill, 228px);
    grid-auto-rows: 64px;
    padding: 13px 0 8px 30px;
}

.tile {
    display: flex;
    align-items: flex-start;
    gap: 6px;
}

.tile > svg {
    margin-top: 1px;
}

.tile-text {
    white-space: nowrap;
}

.tile-text svg {
    margin-top: 2px;
}

.muted {
    color: #6d6d6d;
}

.recent {
    width: 100%;
    margin-top: 11px;
    border-collapse: collapse;
}

.recent tr {
    display: grid;
    grid-template-columns: 537px 1fr;
}

.recent td {
    height: 25px;
    line-height: 25px;
    color: #6d6d6d;
    white-space: nowrap;
}

.recent td.name {
    display: flex;
    align-items: center;
    gap: 9px;
    padding-left: 29px;
    color: #000;
}

/* Status bar */
.status-bar {
    display: flex;
    align-items: center;
    justify-content: space-between;
    height: 21px;
    padding: 0 9px 0 14px;
}

.item-count {
    padding-right: 10px;
    border-right: 1px solid #f0f0f0;
    color: #1e395b;
}

.view-buttons {
    display: flex;
    gap: 6px;
}
```
